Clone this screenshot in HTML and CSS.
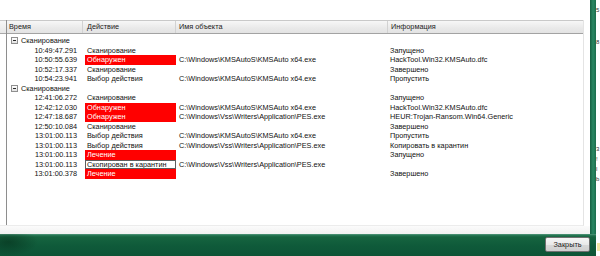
FILE: index.html
```html
<!DOCTYPE html>
<html lang="ru">
<head>
<meta charset="utf-8">
<title>Отчёт</title>
<link rel="stylesheet" href="styles.css">
</head>
<body>
<div class="screen">
  <div class="window">
    <div class="body">
      <div class="panel">
        <div class="list">
          <div class="stub"><div class="stub-head"></div></div>
          <div class="table">
            <div class="head">
              <div class="hc h-time">Время</div>
              <div class="hc h-act">Действие</div>
              <div class="hc h-obj">Имя объекта</div>
              <div class="hc h-info">Информация</div>
            </div>
            <div class="rows">
              <div class="group"><span class="exp"><span class="minus"></span></span>Сканирование</div>
              <div class="row"><span class="c-time">10:49:47.291</span><span class="c-act">Сканирование</span><span class="c-obj"></span><span class="c-info">Запущено</span></div>
              <div class="row"><span class="c-time">10:50:55.639</span><span class="c-act alert">Обнаружен</span><span class="c-obj">C:\Windows\KMSAutoS\KMSAuto x64.exe</span><span class="c-info">HackTool.Win32.KMSAuto.dfc</span></div>
              <div class="row"><span class="c-time">10:52:17.337</span><span class="c-act">Сканирование</span><span class="c-obj"></span><span class="c-info">Завершено</span></div>
              <div class="row"><span class="c-time">10:54:23.941</span><span class="c-act">Выбор действия</span><span class="c-obj">C:\Windows\KMSAutoS\KMSAuto x64.exe</span><span class="c-info">Пропустить</span></div>
              <div class="group"><span class="exp"><span class="minus"></span></span>Сканирование</div>
              <div class="row"><span class="c-time">12:41:06.272</span><span class="c-act">Сканирование</span><span class="c-obj"></span><span class="c-info">Запущено</span></div>
              <div class="row"><span class="c-time">12:42:12.030</span><span class="c-act alert">Обнаружен</span><span class="c-obj">C:\Windows\KMSAutoS\KMSAuto x64.exe</span><span class="c-info">HackTool.Win32.KMSAuto.dfc</span></div>
              <div class="row"><span class="c-time">12:47:18.687</span><span class="c-act alert">Обнаружен</span><span class="c-obj">C:\Windows\Vss\Writers\Application\PES.exe</span><span class="c-info">HEUR:Trojan-Ransom.Win64.Generic</span></div>
              <div class="row"><span class="c-time">12:50:10.084</span><span class="c-act">Сканирование</span><span class="c-obj"></span><span class="c-info">Завершено</span></div>
              <div class="row"><span class="c-time">13:01:00.113</span><span class="c-act">Выбор действия</span><span class="c-obj">C:\Windows\KMSAutoS\KMSAuto x64.exe</span><span class="c-info">Пропустить</span></div>
              <div class="row"><span class="c-time">13:01:00.113</span><span class="c-act">Выбор действия</span><span class="c-obj">C:\Windows\Vss\Writers\Application\PES.exe</span><span class="c-info">Копировать в карантин</span></div>
              <div class="row"><span class="c-time">13:01:00.113</span><span class="c-act alert">Лечение</span><span class="c-obj"></span><span class="c-info">Запущено</span></div>
              <div class="row"><span class="c-time">13:01:00.113</span><span class="c-act boxed">Скопирован в карантин</span><span class="c-obj">C:\Windows\Vss\Writers\Application\PES.exe</span><span class="c-info"></span></div>
              <div class="row"><span class="c-time">13:01:00.378</span><span class="c-act alert">Лечение</span><span class="c-obj"></span><span class="c-info">Завершено</span></div>
            </div>
          </div>
        </div>
        <div class="band"></div>
      </div>
      <div class="side"></div>
    </div>
    <div class="footer"><button class="btn">Закрыть</button></div>
  </div>
  <div class="outside">
    <div class="frag f1">5</div>
    <div class="frag f2">8</div>
    <div class="frag f3">3</div>
    <div class="frag f4">!</div>
    <div class="frag f5">l</div>
    <div class="frag f6">b</div>
    <div class="ybit"></div>
  </div>
</div>
</body>
</html>
```

FILE: styles.css
```css
* { box-sizing: border-box; }
html, body { margin: 0; padding: 0; background: #fff; }
body {
  font-family: "Liberation Sans", Arial, sans-serif;
  font-size: 7.3px;
  color: #111;
}
.screen { display: flex; width: 600px; height: 256px; overflow: hidden; }
.window { width: 596px; display: flex; flex-direction: column; }
.body { display: flex; height: 234px; }
.panel { width: 590px; display: flex; flex-direction: column; padding-top: 20px; background: #fff; }
.list {
  width: 584px; height: 206px; display: flex;
  border-right: 1px solid #e4e4e4;
  border-bottom: 1px solid #ececec;
}
.stub { width: 6px; }
.stub-head {
  height: 14px;
  border-top: 1px solid #c9c9c9;
  border-bottom: 1px solid #a9a9a9;
  background: linear-gradient(#f6f6f6, #e7e7e7);
}
.table { flex: 1; border-left: 1px solid #8e8e8e; display: flex; flex-direction: column; }
.head {
  height: 14px; display: grid;
  grid-template-columns: 76px 93px 212px 1fr;
  border-top: 1px solid #c9c9c9;
  border-bottom: 1px solid #a3a3a3;
  background: linear-gradient(#f7f7f7, #e9e9e9 60%, #e3e3e3);
}
.hc { line-height: 12px; color: #222; border-right: 1px solid #d2d2d2; white-space: nowrap; overflow: hidden; }
.h-time { padding-left: 2px; }
.h-act { padding-left: 4px; }
.h-obj { padding-left: 3px; }
.h-info { padding-left: 3px; border-right: none; }
.rows { padding-top: 2px; }
.row {
  display: grid; grid-template-columns: 76px 93px 212px 1fr;
  height: 9.5px; line-height: 9.5px; white-space: nowrap;
}
.group { height: 9.5px; line-height: 9.5px; display: flex; align-items: center; padding-left: 4px; }
.exp {
  width: 7px; height: 7px; margin-right: 3px;
  border: 1px solid #8f8f8f; background: linear-gradient(#fff, #e2e2e2);
  display: flex; align-items: center; justify-content: center;
}
.minus { width: 3px; height: 1px; background: #2a2a2a; }
.c-time { text-align: right; padding-right: 6px; }
.c-act { padding-left: 4px; overflow: hidden; }
.c-act.alert { margin-left: 2px; padding-left: 2px; background: #ff0000; color: #fff; }
.c-act.boxed { margin-left: 2px; padding-left: 1px; border: 1px solid #5e5e5e; line-height: 7.5px; background: #fff; }
.c-obj { padding-left: 3px; overflow: hidden; }
.c-info { padding-left: 2px; overflow: hidden; }
.band { flex: 1; background: linear-gradient(#fbfbfb, #f1f1f1); }
.side { width: 6px; background: linear-gradient(to right, #175f41, #2a8763 50%, #1b6b4b); }
.footer {
  flex: 1; display: flex; justify-content: flex-end; align-items: flex-start;
  padding: 3px 6px 0 0;
  background:
    radial-gradient(ellipse 30px 14px at 8px 8px, rgba(0,30,15,0.45), rgba(0,30,15,0) 100%),
    linear-gradient(#5f9f84 0, #2a7a58 1px, #16643f 3px, #0f5a3a 12px, #0d5436 100%);
}
.btn {
  width: 45px; height: 15px; padding: 0;
  font-family: "Liberation Sans", Arial, sans-serif; font-size: 7.3px; color: #222;
  border: 1px solid #707070; border-radius: 2px;
  background: linear-gradient(#f6f6f6, #e9e9e9 50%, #d9d9d9 50%, #cfcfcf);
}
.outside { width: 4px; position: relative; overflow: hidden; background: #fff; }
.frag { position: absolute; left: 0; font-size: 6px; color: #333; white-space: nowrap; }
.f1 { top: 7px; }
.f2 { top: 39px; }
.f3 { top: 146px; }
.f4 { top: 156px; }
.f5 { top: 166px; }
.f6 { top: 176px; }
.ybit { position: absolute; left: 1px; top: 243px; width: 3px; height: 8px; background: #f3e6a4; }
```
